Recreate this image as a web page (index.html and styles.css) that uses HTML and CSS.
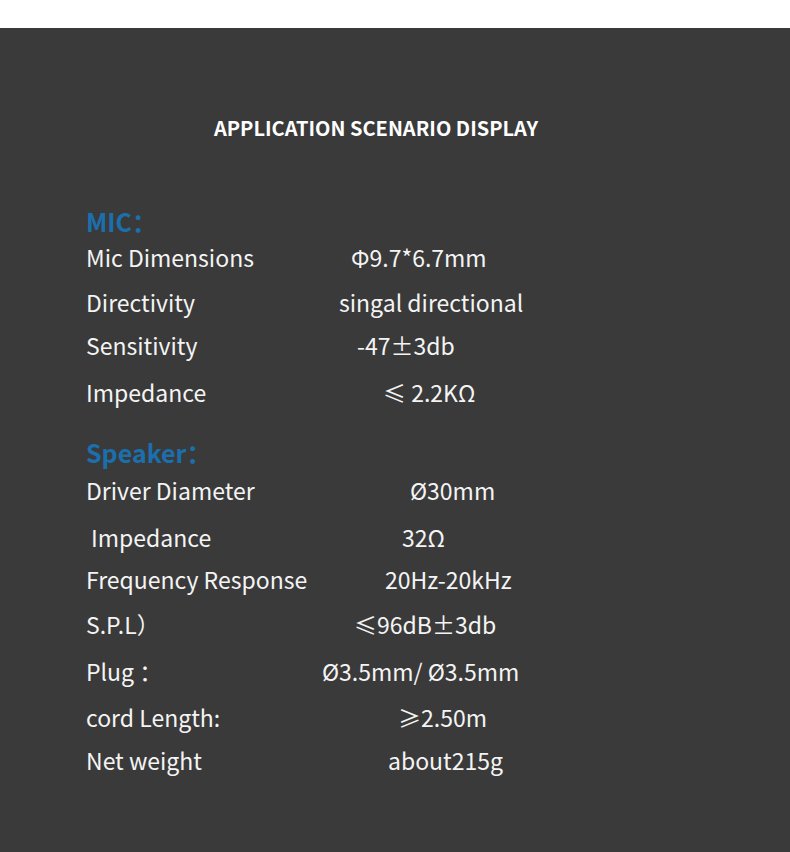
FILE: index.html
```html
<!DOCTYPE html>
<html lang="en">
<head>
<meta charset="utf-8">
<title>Application Scenario Display</title>
<link rel="stylesheet" href="styles.css">
</head>
<body>
<div class="topbar"></div>
<main class="panel">
  <h1 class="title">APPLICATION SCENARIO DISPLAY</h1>
  <section class="group mic">
    <h2 class="heading">MIC：</h2>
    <div class="row r-dim"><span class="label">Mic Dimensions</span><span class="value">Φ9.7*6.7mm</span></div>
    <div class="row r-dir"><span class="label">Directivity</span><span class="value">singal directional</span></div>
    <div class="row r-sen"><span class="label">Sensitivity</span><span class="value">-47±3db</span></div>
    <div class="row r-imp"><span class="label">Impedance</span><span class="value">≤ 2.2KΩ</span></div>
  </section>
  <section class="group speaker">
    <h2 class="heading">Speaker：</h2>
    <div class="row r-drv"><span class="label">Driver Diameter</span><span class="value">Ø30mm</span></div>
    <div class="row r-imp2"><span class="label indent">Impedance</span><span class="value">32Ω</span></div>
    <div class="row r-frq"><span class="label">Frequency Response</span><span class="value">20Hz-20kHz</span></div>
    <div class="row r-spl"><span class="label">S.P.L）</span><span class="value">≤96dB±3db</span></div>
    <div class="row r-plg"><span class="label">Plug ：</span><span class="value">Ø3.5mm/ Ø3.5mm</span></div>
    <div class="row r-crd"><span class="label">cord Length:</span><span class="value">≥2.50m</span></div>
    <div class="row r-net"><span class="label">Net weight</span><span class="value">about215g</span></div>
  </section>
</main>
</body>
</html>
```
FILE: styles.css
```css
html, body {
  margin: 0;
  padding: 0;
  background: #3a3a3a;
}
body {
  width: 790px;
  height: 852px;
  overflow: hidden;
  font-family: "Noto Sans CJK SC", "Noto Sans", sans-serif;
  color: #f4f4f4;
}
.topbar {
  height: 28px;
  background: #ffffff;
}
.panel {
  height: 824px;
  background: #3a3a3a;
  padding: 0 0 0 86px;
  box-sizing: border-box;
}
.title {
  margin: 0;
  padding: 86px 0 0 0;
  width: 580px;
  text-align: center;
  font-size: 20px;
  font-weight: 700;
  line-height: 28px;
  color: #ffffff;
}
.group {
  display: flex;
  flex-direction: column;
}
.mic { margin-top: 61px; }
.speaker { margin-top: 27px; }
.heading {
  margin: 0;
  font-size: 25px;
  font-weight: 700;
  line-height: 36px;
  color: #1b6fad;
}
.row {
  display: flex;
  font-size: 23px;
  line-height: 30px;
  height: 30px;
}
.label {
  width: 0;
  white-space: nowrap;
}
.label.indent { padding-left: 5px; }
.value { white-space: nowrap; }
.r-dim { margin-top: 3px; }
.r-dim .value { margin-left: 265px; }
.r-dir { margin-top: 15px; }
.r-dir .value { margin-left: 253px; }
.r-sen { margin-top: 13px; }
.r-sen .value { margin-left: 271px; }
.r-imp { margin-top: 17px; }
.r-imp .value { margin-left: 297px; }
.r-drv { margin-top: 5px; }
.r-drv .value { margin-left: 324px; }
.r-imp2 { margin-top: 17px; }
.r-imp2 .value { margin-left: 311px; }
.r-frq { margin-top: 12px; }
.r-frq .value { margin-left: 299px; }
.r-spl { margin-top: 15px; }
.r-spl .value { margin-left: 268px; }
.r-plg { margin-top: 17px; }
.r-plg .value { margin-left: 236px; }
.r-crd { margin-top: 16px; }
.r-crd .value { margin-left: 312px; }
.r-net { margin-top: 13px; }
.r-net .value { margin-left: 302px; }
```
